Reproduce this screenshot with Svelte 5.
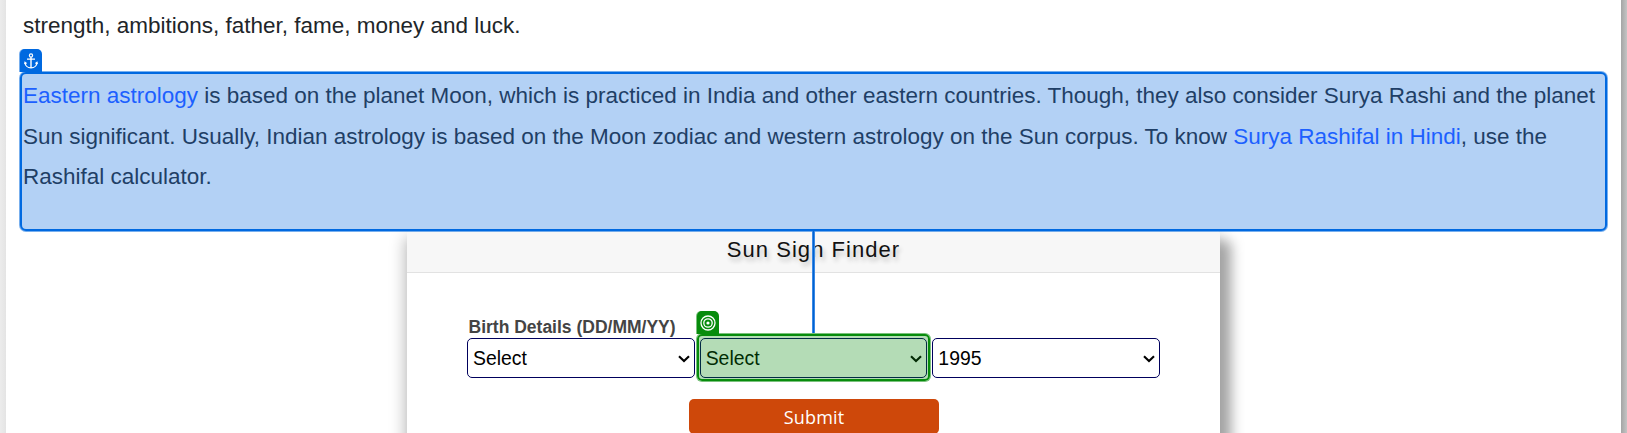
<script>
  const fields = [
    { id: 'day', value: 'Select' },
    { id: 'month', value: 'Select', target: true },
    { id: 'year', value: '1995' }
  ];
</script>

<main class="page">
  <p class="lead">strength, ambitions, father, fame, money and luck.</p>

  <section class="anchor">
    <span class="badge blue">
      <svg viewBox="0 0 14 16" width="14" height="16" fill="none" stroke="#fff" stroke-width="1.2">
        <circle cx="7" cy="2.4" r="1.6" />
        <path d="M7 4V15M3 6.1H11" stroke-width="1.4" />
        <path d="M1 9.2C1 12.8 3.8 14.8 7 14.9C10.2 14.8 13 12.8 13 9.2M.6 11.2L1 9.2L2.6 10.4M13.4 11.2L13 9.2L11.4 10.4" />
      </svg>
    </span>
    <p><a href="#eastern">Eastern astrology</a> is based on the planet Moon, which is practiced in India and other eastern countries. Though, they also consider Surya Rashi and the planet</p>
    <p>Sun significant. Usually, Indian astrology is based on the Moon zodiac and western astrology on the Sun corpus. To know <a href="#surya">Surya Rashifal in Hindi</a>, use the</p>
    <p>Rashifal calculator.</p>
    <span class="connector"></span>
  </section>

  <form class="card">
    <h2>Sun Sign Finder</h2>
    <div class="body">
      <div class="label">Birth Details (DD/MM/YY)</div>
      <div class="fields">
        {#each fields as f (f.id)}
          <div class="select">
            <span>{f.value}</span>
            <svg viewBox="0 0 12 8" width="12" height="8"><path d="M1 1.2L6 6L11 1.2" fill="none" stroke="currentColor" stroke-width="2.1" /></svg>
            {#if f.target}
              <div class="target">
                <span class="badge green">
                  <svg viewBox="0 0 16 16" width="16" height="16" fill="none" stroke="#fff" stroke-width="1.3">
                    <circle cx="8" cy="8" r="7" /><circle cx="8" cy="8" r="4.2" /><circle cx="8" cy="8" r="1.6" fill="#fff" stroke="none" />
                  </svg>
                </span>
              </div>
            {/if}
          </div>
        {/each}
      </div>
      <button type="button">Submit</button>
    </div>
  </form>
</main>

<style>
  :global(body) {
    background: linear-gradient(90deg, #ececec 0, #e4e4e4 6px, #a5a5a5 1621px, #c4c4c4 1627px);
    font-family: "Liberation Sans", Arial, sans-serif;
    overflow: hidden;
  }
  .page {
    box-sizing: border-box;
    width: 1615px;
    height: 433px;
    margin-left: 6px;
    background: #fff;
    overflow: hidden;
  }
  p {
    margin: 0;
    font-size: 22.49px;
    line-height: 40.5px;
    font-variant-ligatures: none;
    white-space: nowrap;
    color: #212529;
  }
  .lead { height: 72px; padding-left: 17px; line-height: 51px; box-sizing: border-box; }
  .anchor {
    position: relative;
    box-sizing: border-box;
    width: 1587px;
    height: 159px;
    margin-left: 14px;
    padding: 2px 0 0 1px;
    border: 2px solid #0069e0;
    border-radius: 6px;
    background: #b3d1f5;
    box-shadow: 0 0 0 1px #0069e088;
    z-index: 2;
  }
  .anchor p { color: #1f3f66; }
  .anchor a { color: #1c60ff; text-decoration: none; }
  .badge {
    position: absolute;
    left: -2px;
    top: -25px;
    width: 22px;
    height: 23px;
    border-radius: 5px 5px 0 0;
    display: flex;
    align-items: center;
    justify-content: center;
  }
  .blue { background: #0069e0; box-shadow: -1px 0 0 #0069e088; }
  .green { background: #078c0c; box-shadow: -1px 0 0 #078c0c88; }
  .connector {
    position: absolute;
    left: 790px;
    top: 157px;
    width: 1px;
    height: 102px;
    background: #0063cf;
    border: solid #3987e6;
    border-width: 0 1px;
  }
  .card {
    width: 813px;
    height: 260px;
    margin: 0 0 0 401px;
    border-radius: 4px;
    background: #fff;
    box-shadow: 11px 10px 13px #a4a4a4, -2px 6px 16px #bbb;
  }
  h2 {
    box-sizing: border-box;
    height: 42px;
    margin: 0;
    border-bottom: 1px solid #e2e2e2;
    border-radius: 4px 4px 0 0;
    background: #f7f7f7;
    text-align: center;
    font-size: 22px;
    font-weight: 400;
    line-height: 37px;
    letter-spacing: 1.05px;
    color: #111;
    text-shadow: 2px 4px 4px #c4c4c4;
  }
  .body { padding: 40px 60px 0; }
  .label {
    height: 25px;
    padding-left: 1.5px;
    font-size: 17.5px;
    font-weight: 700;
    line-height: 29px;
    color: #444;
  }
  .fields { display: flex; gap: 5px; }
  .select {
    position: relative;
    box-sizing: border-box;
    width: 228px;
    height: 40px;
    padding: 1px 4px 0 5px;
    border: 1px solid #00005c;
    border-radius: 5px;
    display: flex;
    align-items: center;
    justify-content: space-between;
    font-size: 19.4px;
    color: #000;
  }
  .target {
    position: absolute;
    inset: -5px -4px -4px;
    border: 2px solid #078c0c;
    border-radius: 5px;
    background: rgba(7, 140, 12, 0.3);
    box-shadow: 0 0 0 1px #078c0c88;
  }
  button {
    display: block;
    width: 250px;
    height: 35px;
    margin: 21px 0 0 222px;
    padding: 0;
    border: 0;
    border-radius: 5px;
    background: #ce480a;
    color: #fff;
    font: 18px/34px "Open Sans", sans-serif;
    letter-spacing: 0.2px;
  }
</style>
